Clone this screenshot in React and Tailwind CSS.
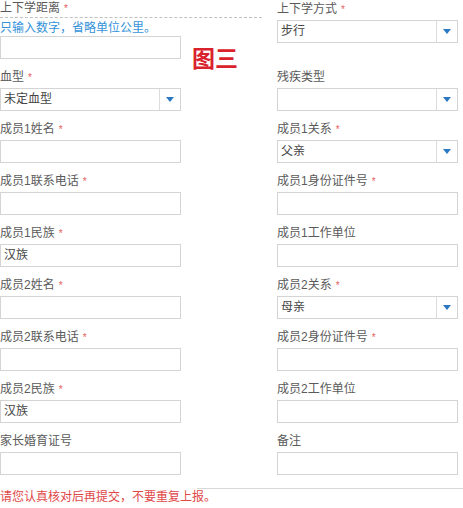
const rows = [
  [
    { label: '血型', req: true, select: true, value: '未定血型' },
    { label: '残疾类型', select: true },
  ],
  [
    { label: '成员1姓名', req: true },
    { label: '成员1关系', req: true, select: true, value: '父亲' },
  ],
  [
    { label: '成员1联系电话', req: true },
    { label: '成员1身份证件号', req: true },
  ],
  [
    { label: '成员1民族', req: true, value: '汉族' },
    { label: '成员1工作单位' },
  ],
  [
    { label: '成员2姓名', req: true },
    { label: '成员2关系', req: true, select: true, value: '母亲' },
  ],
  [
    { label: '成员2联系电话', req: true },
    { label: '成员2身份证件号', req: true },
  ],
  [
    { label: '成员2民族', req: true, value: '汉族' },
    { label: '成员2工作单位' },
  ],
  [
    { label: '家长婚育证号' },
    { label: '备注' },
  ],
];

function Label({ text, req }) {
  return (
    <div className="h-[16px] text-[12px] leading-[16px] text-[#5a5a5a] whitespace-nowrap">
      {text}
      {req && <span className="ml-[4px] text-[10px] text-[#e46060]">*</span>}
    </div>
  );
}

function Box({ select, value }) {
  return (
    <div className="flex h-[23px] w-[181px] border border-[#d4d4d4] bg-white">
      <div className="flex-1 pl-[3px] text-[12px] leading-[21px] text-[#444]">{value}</div>
      {select && (
        <div className="flex w-[21px] items-center justify-center border-l border-[#dcdcdc]">
          <svg width="8" height="5" viewBox="0 0 8 5">
            <path d="M0 0h8L4 5z" fill="#2a78c2" />
          </svg>
        </div>
      )}
    </div>
  );
}

function Field({ f }) {
  return (
    <div className="w-[181px]">
      <Label text={f.label} req={f.req} />
      <div className="mt-[3px]">
        <Box select={f.select} value={f.value} />
      </div>
    </div>
  );
}

export default function App() {
  return (
    <div
      className="relative w-[463px] h-[508px] overflow-hidden bg-white"
      style={{ fontFamily: '"Liberation Sans", "Noto Sans CJK SC", sans-serif' }}
    >
      <div className="flex">
        <div className="w-[277px]">
          <div className="w-[262px] h-[18px] border-b border-dashed border-[#c0c0c0]">
            <Label text="上下学距离" req />
          </div>
          <div className="mt-[2px] h-[16px] text-[12px] leading-[16px] text-[#3492d8]">
            只输入数字，省略单位公里。
          </div>
          <Box />
        </div>
        <div className="pt-[1px]">
          <Field f={{ label: '上下学方式', req: true, select: true, value: '步行' }} />
        </div>
      </div>

      <div className="absolute left-[192px] top-[46px] text-[23px] leading-[26px] font-bold text-[#d9222c]">
        图三
      </div>

      {rows.map((r, i) => (
        <div key={i} className="flex pt-[10px]">
          <div className="w-[277px]">
            <Field f={r[0]} />
          </div>
          <Field f={r[1]} />
        </div>
      ))}

      <div className="mt-[13px] ml-[197px] border-t border-[#d8d8d8]" />
      <div className="h-[16px] text-[12px] leading-[16px] text-[#e04848]">
        请您认真核对后再提交，不要重复上报。
      </div>
    </div>
  );
}
